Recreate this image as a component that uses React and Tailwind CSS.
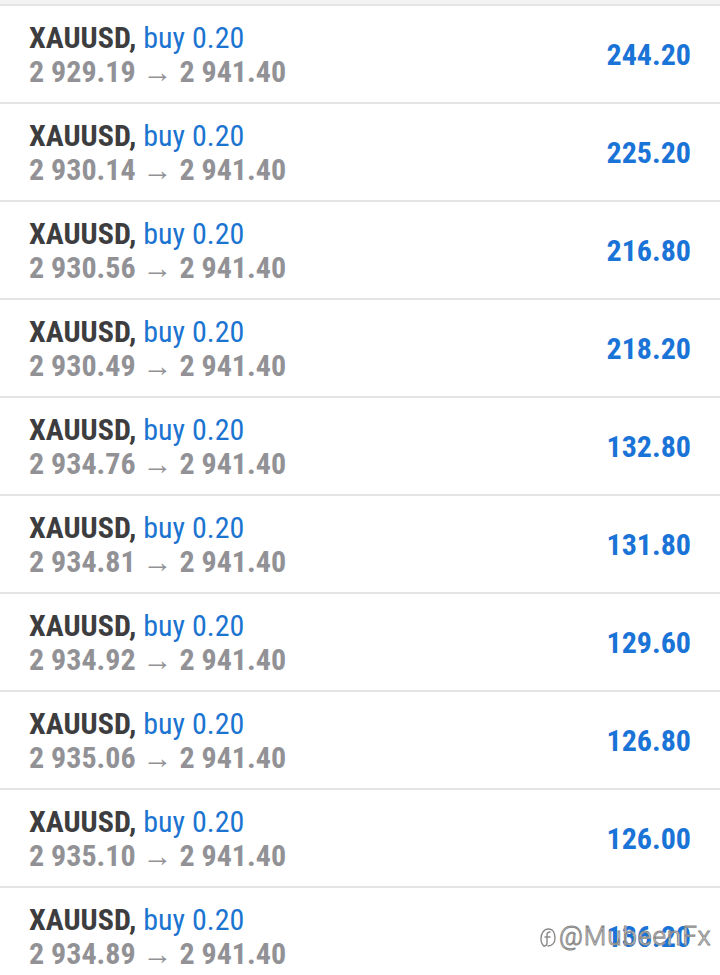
import React from 'react';

const trades = [
  { open: '2 929.19', profit: '244.20' },
  { open: '2 930.14', profit: '225.20' },
  { open: '2 930.56', profit: '216.80' },
  { open: '2 930.49', profit: '218.20' },
  { open: '2 934.76', profit: '132.80' },
  { open: '2 934.81', profit: '131.80' },
  { open: '2 934.92', profit: '129.60' },
  { open: '2 935.06', profit: '126.80' },
  { open: '2 935.10', profit: '126.00' },
  { open: '2 934.89', profit: '136.20' },
];

const font = { fontFamily: '"Roboto Condensed", "Liberation Sans Narrow", Roboto, sans-serif' };

function TradeRow({ open, profit }) {
  return (
    <div className="flex h-[98px] items-center justify-between border-t-2 border-[#e4e4e4] bg-white pl-[29px] pr-[29px]">
      <div className="flex flex-col pt-[2px]">
        <div className="text-[30px] leading-[34px]">
          <span className="font-bold text-[#3d3d40]">XAUUSD,</span>{' '}
          <span className="text-[#1c74d1]">buy 0.20</span>
        </div>
        <div className="text-[30px] font-bold leading-[34px] text-[#929296]">
          {open} <span className="font-normal">→</span> 2 941.40
        </div>
      </div>
      <div className="text-[30px] font-bold text-[#1a73d6]">{profit}</div>
    </div>
  );
}

export default function App() {
  return (
    <div className="relative h-[975px] w-[720px] overflow-hidden bg-[#f3f3f3] pt-[4px]" style={font}>
      {trades.map((t, i) => (
        <TradeRow key={i} {...t} />
      ))}
      <div
        className="absolute left-[540px] top-[917px] flex items-center gap-[3px] text-[26px] font-light tracking-[1px] text-white [-webkit-text-stroke:1px_#8a8a8a]"
        style={{ fontFamily: 'Roboto, sans-serif' }}
      >
        <svg width="16" height="22" viewBox="0 0 16 22" fill="none" stroke="#8a8a8a" strokeWidth="1.4" strokeLinecap="round">
          <path d="M4 20c-2-1.5-3-4-3-7C1 7 4 3 8.5 3S15 7 15 12s-3 8-7 8" />
          <path d="M10 6c-2 0-3 1-3 3v8c0 2-1 3-3 3" />
          <path d="M5 11h5" />
        </svg>
        <span>@MubeenFx</span>
      </div>
    </div>
  );
}
